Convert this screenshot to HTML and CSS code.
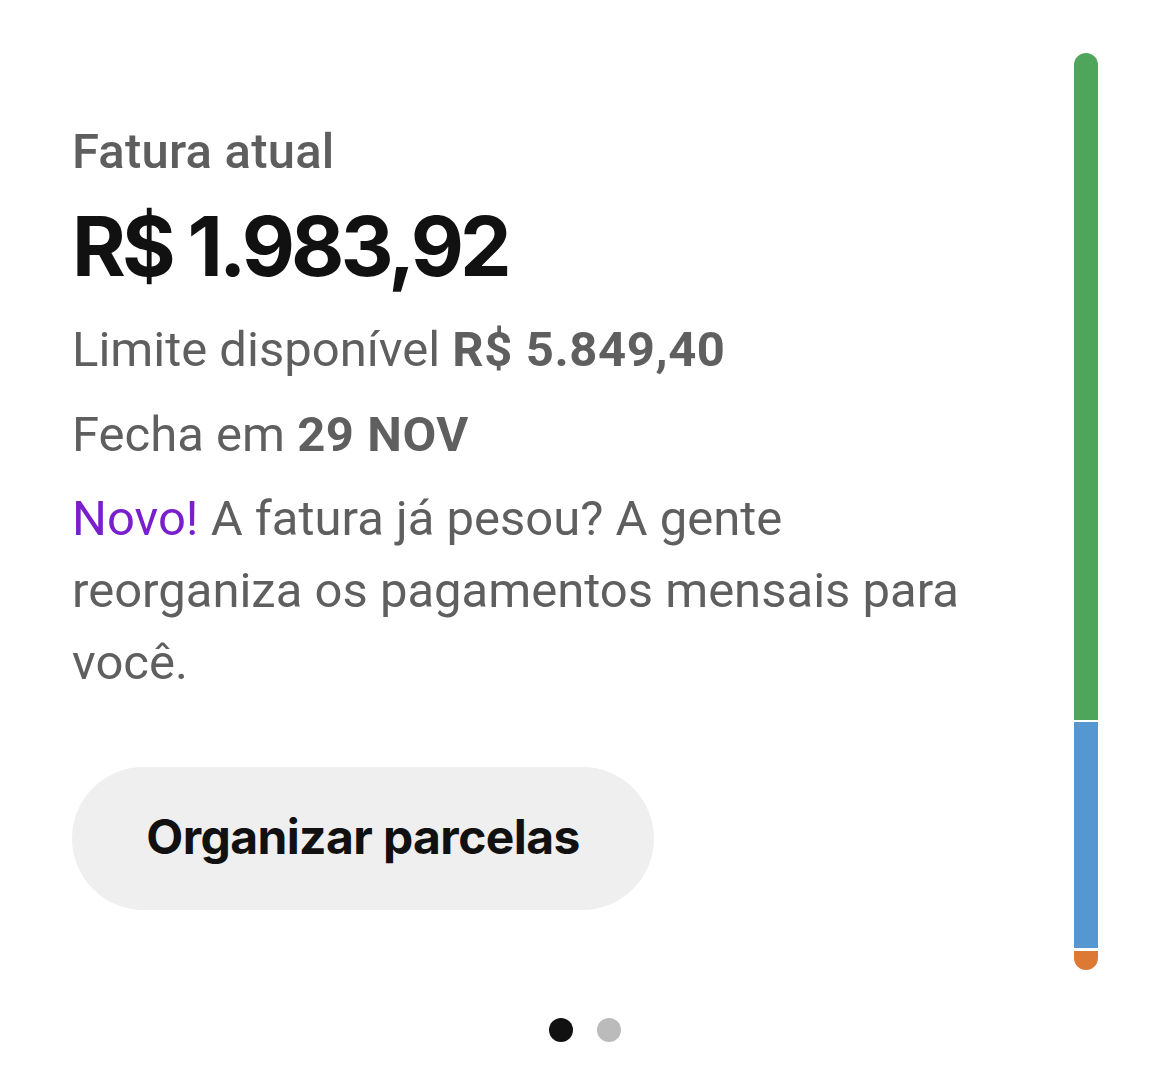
FILE: index.html
```html
<!DOCTYPE html>
<html lang="pt-BR">
<head>
<meta charset="utf-8">
<title>Fatura atual</title>
<link rel="stylesheet" href="styles.css">
</head>
<body>
<main class="screen">
  <section class="card">
    <div class="content">
      <p class="label">Fatura atual</p>
      <p class="amount">R$ 1.983,92</p>
      <p class="info">Limite disponível <strong>R$ 5.849,40</strong></p>
      <p class="info info-close">Fecha em <strong>29 NOV</strong></p>
      <p class="promo"><span class="new">Novo!</span> A fatura já pesou? A gente reorganiza os pagamentos mensais para você.</p>
      <button class="btn" type="button">Organizar parcelas</button>
    </div>
    <div class="bar">
      <div class="seg seg-green"></div>
      <div class="seg seg-blue"></div>
      <div class="seg seg-orange"></div>
    </div>
  </section>
  <div class="dots">
    <span class="dot dot-active"></span>
    <span class="dot"></span>
  </div>
</main>
</body>
</html>
```

FILE: styles.css
```css
* { box-sizing: border-box; }
html, body {
  margin: 0;
  padding: 0;
  background: #ffffff;
}
body {
  font-family: Roboto, "Liberation Sans", sans-serif;
  color: #5f5f5f;
}
.screen {
  width: 1170px;
  height: 1079px;
  overflow: hidden;
}
.card {
  display: flex;
  padding: 0 72px 0 72px;
}
.content {
  flex: 1;
  padding-top: 124px;
}
.content p { margin: 0; }
.label {
  font-family: Roboto, sans-serif;
  font-weight: 500;
  font-size: 49px;
  line-height: 56px;
  letter-spacing: 0.2px;
  color: #5e5e5e;
}
.amount {
  margin-top: 26px !important;
  font-family: Inter, Roboto, sans-serif;
  font-weight: 700;
  font-size: 82px;
  line-height: 82px;
  letter-spacing: -3.8px;
  color: #111111;
}
.info {
  margin-top: 34px !important;
  font-size: 49px;
  line-height: 56px;
  font-weight: 400;
  color: #5f5f5f;
}
.info strong {
  font-weight: 700;
  letter-spacing: 0.6px;
}
.info-close { margin-top: 29px !important; }
.promo {
  margin-top: 20px !important;
  width: 900px;
  font-size: 49px;
  line-height: 72px;
  color: #5f5f5f;
}
.new { color: #7a1fcc; }
.btn {
  display: flex;
  align-items: center;
  justify-content: center;
  margin-top: 68px;
  width: 582px;
  height: 143px;
  border: none;
  border-radius: 72px;
  background: #efefef;
  font-family: Inter, Roboto, sans-serif;
  font-weight: 700;
  font-size: 48px;
  letter-spacing: -0.6px;
  color: #111111;
  padding: 0 0 4px 0;
}
.bar {
  width: 24px;
  margin-top: 53px;
  display: flex;
  flex-direction: column;
  gap: 2px;
}
.seg { width: 100%; }
.seg-green {
  height: 667px;
  background: #4fa65a;
  border-radius: 12px 12px 0 0;
}
.seg-blue {
  height: 226px;
  background: #5497d1;
}
.seg-orange {
  height: 19px;
  margin-top: 1px;
  background: #dc7a35;
  border-radius: 0 0 12px 12px;
}
.dots {
  display: flex;
  justify-content: center;
  gap: 24px;
  margin-top: 48px;
}
.dot {
  width: 24px;
  height: 24px;
  border-radius: 50%;
  background: #bbbbbb;
}
.dot-active { background: #111111; }
```
